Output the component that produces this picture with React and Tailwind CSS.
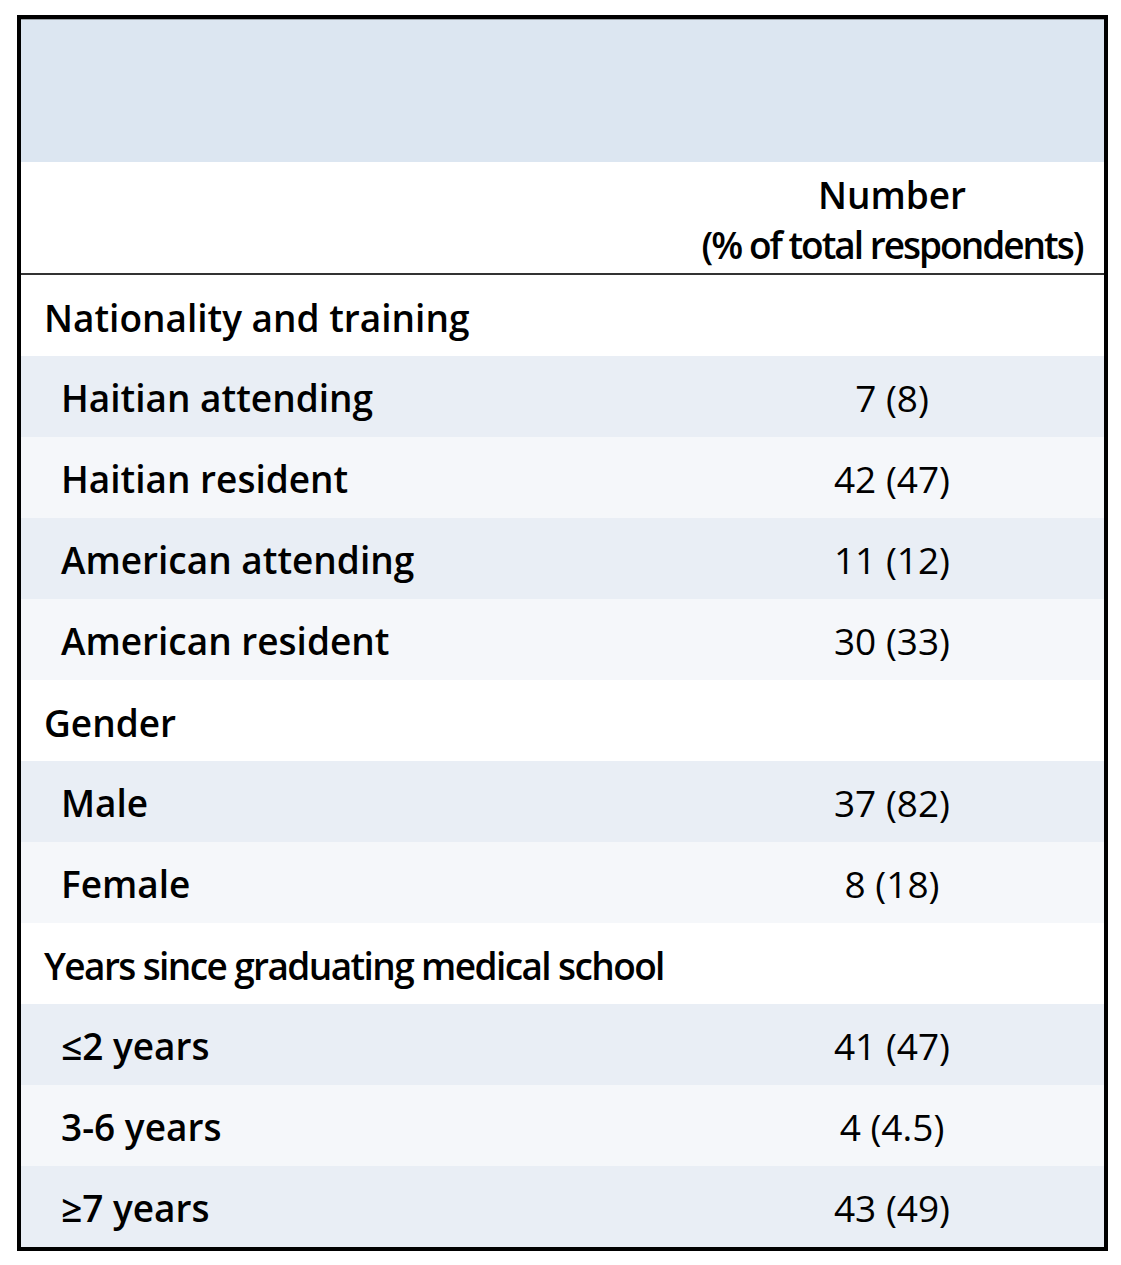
import React from 'react';

const sections = [
  {
    title: 'Nationality and training',
    rows: [
      ['Haitian attending', '7 (8)'],
      ['Haitian resident', '42 (47)'],
      ['American attending', '11 (12)'],
      ['American resident', '30 (33)'],
    ],
  },
  {
    title: 'Gender',
    rows: [
      ['Male', '37 (82)'],
      ['Female', '8 (18)'],
    ],
  },
  {
    title: 'Years since graduating medical school',
    condensed: true,
    rows: [
      ['\u22642 years', '41 (47)'],
      ['3-6 years', '4 (4.5)'],
      ['\u22657 years', '43 (49)'],
    ],
  },
];

export default function App() {
  let stripe = 0;
  return (
    <div className="min-h-screen bg-white pt-[15px] pl-[17px]" style={{ fontFamily: '"Open Sans", "Noto Sans", sans-serif' }}>
      <div className="w-[1091px] border-4 border-black text-black">
        {/* top band */}
        <div className="h-[143px] bg-[#dce6f1] border-t border-[#9aa0a6]"></div>

        {/* column header */}
        <div className="flex h-[113px] border-b-2 border-[#333]">
          <div className="w-[659px]"></div>
          <div className="flex-1 flex flex-col items-center justify-end pb-[3px] text-[37px] font-semibold leading-[50px]">
            <span>Number</span>
            <span className="tracking-[-2px]">(% of total respondents)</span>
          </div>
        </div>

        {sections.map((s) => (
          <div key={s.title}>
            <div className="flex items-center h-[81px] bg-white pl-[23px] pt-[4px] text-[37px] font-semibold">
              <span className={s.condensed ? 'tracking-[-1.6px]' : ''}>{s.title}</span>
            </div>
            {s.rows.map(([label, value]) => {
              const dark = stripe++ % 2 === 0;
              return (
                <div
                  key={label}
                  className={'flex items-center h-[81px] pt-[3px] text-[37px] ' + (dark ? 'bg-[#e9eef5]' : 'bg-[#f5f7fa]')}
                >
                  <div className="w-[659px] pl-[40px] font-semibold">{label}</div>
                  <div className="flex-1 text-center">{value}</div>
                </div>
              );
            })}
          </div>
        ))}
      </div>
    </div>
  );
}
